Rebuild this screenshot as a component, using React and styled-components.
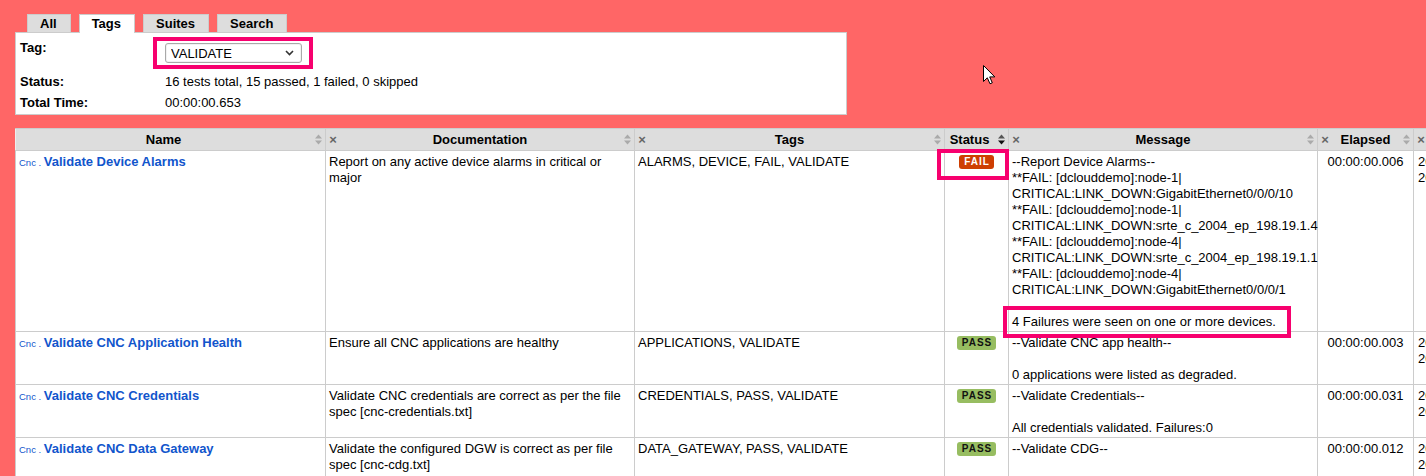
import React from 'react';
import styled, { createGlobalStyle } from 'styled-components';

const GlobalStyle = createGlobalStyle`
  html, body {
    margin: 0;
    padding: 0;
    overflow: hidden;
  }
  body {
    background: #f66;
    font-family: "Liberation Sans", Arial, sans-serif;
    font-size: 13px;
    line-height: 16px;
    color: #000;
  }
`;

const MARK = '#f7006e';

const tests = [
  {
    name: 'Validate Device Alarms',
    doc: 'Report on any active device alarms in critical or major',
    tags: 'ALARMS, DEVICE, FAIL, VALIDATE',
    status: 'FAIL',
    lines: [
      '--Report Device Alarms--',
      '**FAIL: [dclouddemo]:node-1|',
      'CRITICAL:LINK_DOWN:GigabitEthernet0/0/0/10',
      '**FAIL: [dclouddemo]:node-1|',
      'CRITICAL:LINK_DOWN:srte_c_2004_ep_198.19.1.4',
      '**FAIL: [dclouddemo]:node-4|',
      'CRITICAL:LINK_DOWN:srte_c_2004_ep_198.19.1.1',
      '**FAIL: [dclouddemo]:node-4|',
      'CRITICAL:LINK_DOWN:GigabitEthernet0/0/0/1',
    ],
    summary: '4 Failures were seen on one or more devices.',
    elapsed: '00:00:00.006',
    times: ['20230911 14:02:17.881', '20230911 14:02:17.887'],
  },
  {
    name: 'Validate CNC Application Health',
    doc: 'Ensure all CNC applications are healthy',
    tags: 'APPLICATIONS, VALIDATE',
    status: 'PASS',
    lines: ['--Validate CNC app health--'],
    summary: '0 applications were listed as degraded.',
    elapsed: '00:00:00.003',
    times: ['20230911 14:02:17.888', '20230911 14:02:17.891'],
  },
  {
    name: 'Validate CNC Credentials',
    doc: 'Validate CNC credentials are correct as per the file spec [cnc-credentials.txt]',
    tags: 'CREDENTIALS, PASS, VALIDATE',
    status: 'PASS',
    lines: ['--Validate Credentials--'],
    summary: 'All credentials validated. Failures:0',
    elapsed: '00:00:00.031',
    times: ['20230911 14:02:17.892', '20230911 14:02:17.923'],
  },
  {
    name: 'Validate CNC Data Gateway',
    doc: 'Validate the configured DGW is correct as per file spec [cnc-cdg.txt]',
    tags: 'DATA_GATEWAY, PASS, VALIDATE',
    status: 'PASS',
    lines: ['--Validate CDG--'],
    summary: 'Configured DGW matches the file spec.',
    elapsed: '00:00:00.012',
    times: ['20230911 14:02:17.924', '20230911 14:02:17.936'],
  },
];

const columns = [
  { title: 'Name', width: 310, hideable: false },
  { title: 'Documentation', width: 309, hideable: true },
  { title: 'Tags', width: 310, hideable: true },
  { title: 'Status', width: 64, hideable: false, active: true },
  { title: 'Message', width: 309, hideable: true },
  { title: 'Elapsed', width: 96, hideable: true },
  { title: 'Start / End', width: 160, hideable: true },
];

const SortIcon = ({ active }) => (
  <svg width="7" height="11" viewBox="0 0 7 11">
    <polygon points="0,4.5 3.5,0.5 7,4.5" fill={active ? '#555' : '#aaa'} />
    <polygon points="0,6.5 3.5,10.5 7,6.5" fill={active ? '#111' : '#aaa'} />
  </svg>
);

const Chevron = () => (
  <svg width="9" height="6" viewBox="0 0 9 6">
    <polyline points="1,1 4.5,4.5 8,1" fill="none" stroke="#333" strokeWidth="1.6" />
  </svg>
);

const Pointer = () => (
  <svg width="13" height="20" viewBox="0 0 13 20">
    <path
      d="M0.5 0.5 L0.5 16.5 L4.3 12.8 L7 18.8 L9.3 17.8 L6.7 11.9 L11.8 11.9 Z"
      fill="#fff"
      stroke="#000"
      strokeWidth="1"
      strokeLinejoin="miter"
    />
  </svg>
);

const App = () => {
  return (
    <Page>
      <GlobalStyle />
      <TabBar>
        <Tab>All</Tab>
        <Tab $active>Tags</Tab>
        <Tab>Suites</Tab>
        <Tab>Search</Tab>
      </TabBar>

      <StatsPanel>
        <StatLabel>Tag:</StatLabel>
        <StatValue>
          <SelectWrap>
            <TagSelect defaultValue="VALIDATE">
              <option>VALIDATE</option>
              <option>ALARMS</option>
              <option>APPLICATIONS</option>
              <option>CREDENTIALS</option>
            </TagSelect>
            <SelectArrow>
              <Chevron />
            </SelectArrow>
            <Highlight $top={-6} $left={-12} $w={160} $h={32} />
          </SelectWrap>
        </StatValue>
        <StatLabel>Status:</StatLabel>
        <StatValue>16 tests total, 15 passed, 1 failed, 0 skipped</StatValue>
        <StatLabel>Total Time:</StatLabel>
        <StatValue>00:00:00.653</StatValue>
      </StatsPanel>

      <Details>
        <colgroup>
          {columns.map((c) => (
            <Col key={c.title} $w={c.width} />
          ))}
        </colgroup>
        <thead>
          <tr>
            {columns.map((c) => (
              <Th key={c.title}>
                <ThInner>
                  {c.hideable && <HideMark>×</HideMark>}
                  <ThTitle>{c.title}</ThTitle>
                  <SortSlot>
                    <SortIcon active={c.active} />
                  </SortSlot>
                </ThInner>
              </Th>
            ))}
          </tr>
        </thead>
        <tbody>
          {tests.map((t, i) => (
            <tr key={t.name}>
              <Td>
                <ParentName>Cnc . </ParentName>
                <TestName>{t.name}</TestName>
              </Td>
              <Td>{t.doc}</Td>
              <Td>{t.tags}</Td>
              <StatusTd>
                <BadgeWrap>
                  <Badge $fail={t.status === 'FAIL'}>{t.status}</Badge>
                  {t.status === 'FAIL' && <Highlight $top={-6} $left={-22} $w={72} $h={31} />}
                </BadgeWrap>
              </StatusTd>
              <Td>
                {t.lines.map((l, j) => (
                  <Line key={j}>{l}</Line>
                ))}
                <Line>&nbsp;</Line>
                <Summary>
                  {t.summary}
                  {i === 0 && <Highlight $top={-8} $left={-9} $w={288} $h={32} />}
                </Summary>
              </Td>
              <CenterTd>{t.elapsed}</CenterTd>
              <TimeTd>
                {t.times.map((tm) => (
                  <Line key={tm}>{tm}</Line>
                ))}
              </TimeTd>
            </tr>
          ))}
        </tbody>
      </Details>

      <Cursor>
        <Pointer />
      </Cursor>
    </Page>
  );
};

const Page = styled.div`
  position: relative;
  padding: 14px 0 0 15px;
`;

const TabBar = styled.div`
  display: flex;
  align-items: flex-end;
  gap: 8px;
  padding-left: 12px;
`;

const Tab = styled.div`
  position: relative;
  z-index: ${(p) => (p.$active ? 2 : 0)};
  height: ${(p) => (p.$active ? '18px' : '17px')};
  margin-bottom: ${(p) => (p.$active ? '-1px' : '0')};
  padding: 0 13px 0 12px;
  line-height: 18px;
  font-weight: bold;
  background: ${(p) => (p.$active ? '#fff' : '#ddd')};
  border: 1px solid #ccc;
  border-bottom: 0;
`;

const StatsPanel = styled.div`
  position: relative;
  z-index: 1;
  box-sizing: border-box;
  width: 832px;
  display: grid;
  grid-template-columns: 145px 1fr;
  row-gap: 4px;
  padding: 6px 4px 3px;
  background: #fff;
  border: 1px solid #ccc;
`;

const StatLabel = styled.div`
  font-weight: bold;
  padding-top: 1px;
`;

const StatValue = styled.div`
  padding-top: 1px;
`;

const SelectWrap = styled.div`
  position: relative;
  display: inline-block;
  margin: 3px 0 6px;
`;

const TagSelect = styled.select`
  appearance: none;
  display: block;
  box-sizing: border-box;
  width: 137px;
  height: 20px;
  padding: 0 20px 0 5px;
  font-family: "Liberation Sans", Arial, sans-serif;
  font-size: 13px;
  color: #000;
  background: #fff;
  border: 1px solid #a9a9a9;
  border-radius: 3px;
  box-shadow: inset 0 0 0 1px #f2f2f2;
`;

const SelectArrow = styled.span`
  position: absolute;
  right: 8px;
  top: 7px;
  display: flex;
  pointer-events: none;
`;

const Highlight = styled.span`
  position: absolute;
  top: ${(p) => p.$top}px;
  left: ${(p) => p.$left}px;
  width: ${(p) => p.$w}px;
  height: ${(p) => p.$h}px;
  box-sizing: border-box;
  border: 4px solid ${MARK};
  pointer-events: none;
  z-index: 3;
`;

const Details = styled.table`
  margin-top: 13px;
  width: 1558px;
  table-layout: fixed;
  border-collapse: collapse;
  background: #fff;
`;

const Col = styled.col`
  width: ${(p) => p.$w}px;
`;

const Th = styled.th`
  height: 21px;
  padding: 0;
  background: #ddd;
  border: 1px solid #ccc;
  border-left-color: #eee;
  font-weight: bold;
  white-space: nowrap;
  overflow: hidden;
`;

const ThInner = styled.div`
  display: flex;
  align-items: center;
`;

const HideMark = styled.span`
  flex: none;
  width: 14px;
  text-align: center;
  color: #666;
  font-size: 13px;
`;

const ThTitle = styled.span`
  flex: 1;
  text-align: center;
`;

const SortSlot = styled.span`
  flex: none;
  width: 14px;
  display: flex;
  justify-content: center;
`;

const Td = styled.td`
  padding: 3px 3px 1px;
  vertical-align: top;
  border: 1px solid #ccc;
  white-space: normal;
`;

const StatusTd = styled(Td)`
  text-align: center;
`;

const CenterTd = styled(Td)`
  text-align: center;
`;

const TimeTd = styled(Td)`
  padding-left: 4px;
`;

const ParentName = styled.span`
  font-size: 9.5px;
  color: #15c;
  white-space: pre;
`;

const TestName = styled.a`
  font-weight: bold;
  color: #15c;
  text-decoration: none;
`;

const BadgeWrap = styled.span`
  position: relative;
  display: inline-block;
  margin-top: 1px;
  vertical-align: top;
`;

const Badge = styled.span`
  display: block;
  padding: 1px 4px 1px 5px;
  font-size: 10px;
  line-height: 12px;
  font-weight: bold;
  letter-spacing: 1px;
  border-radius: 3px;
  color: ${(p) => (p.$fail ? '#fff' : '#111')};
  background: ${(p) => (p.$fail ? '#ce3e01' : '#97bd61')};
`;

const Line = styled.div`
  white-space: nowrap;
`;

const Summary = styled.div`
  position: relative;
  display: inline-block;
  white-space: nowrap;
`;

const Cursor = styled.div`
  position: absolute;
  left: 983px;
  top: 65px;
  display: flex;
  z-index: 4;
`;

export default App;
